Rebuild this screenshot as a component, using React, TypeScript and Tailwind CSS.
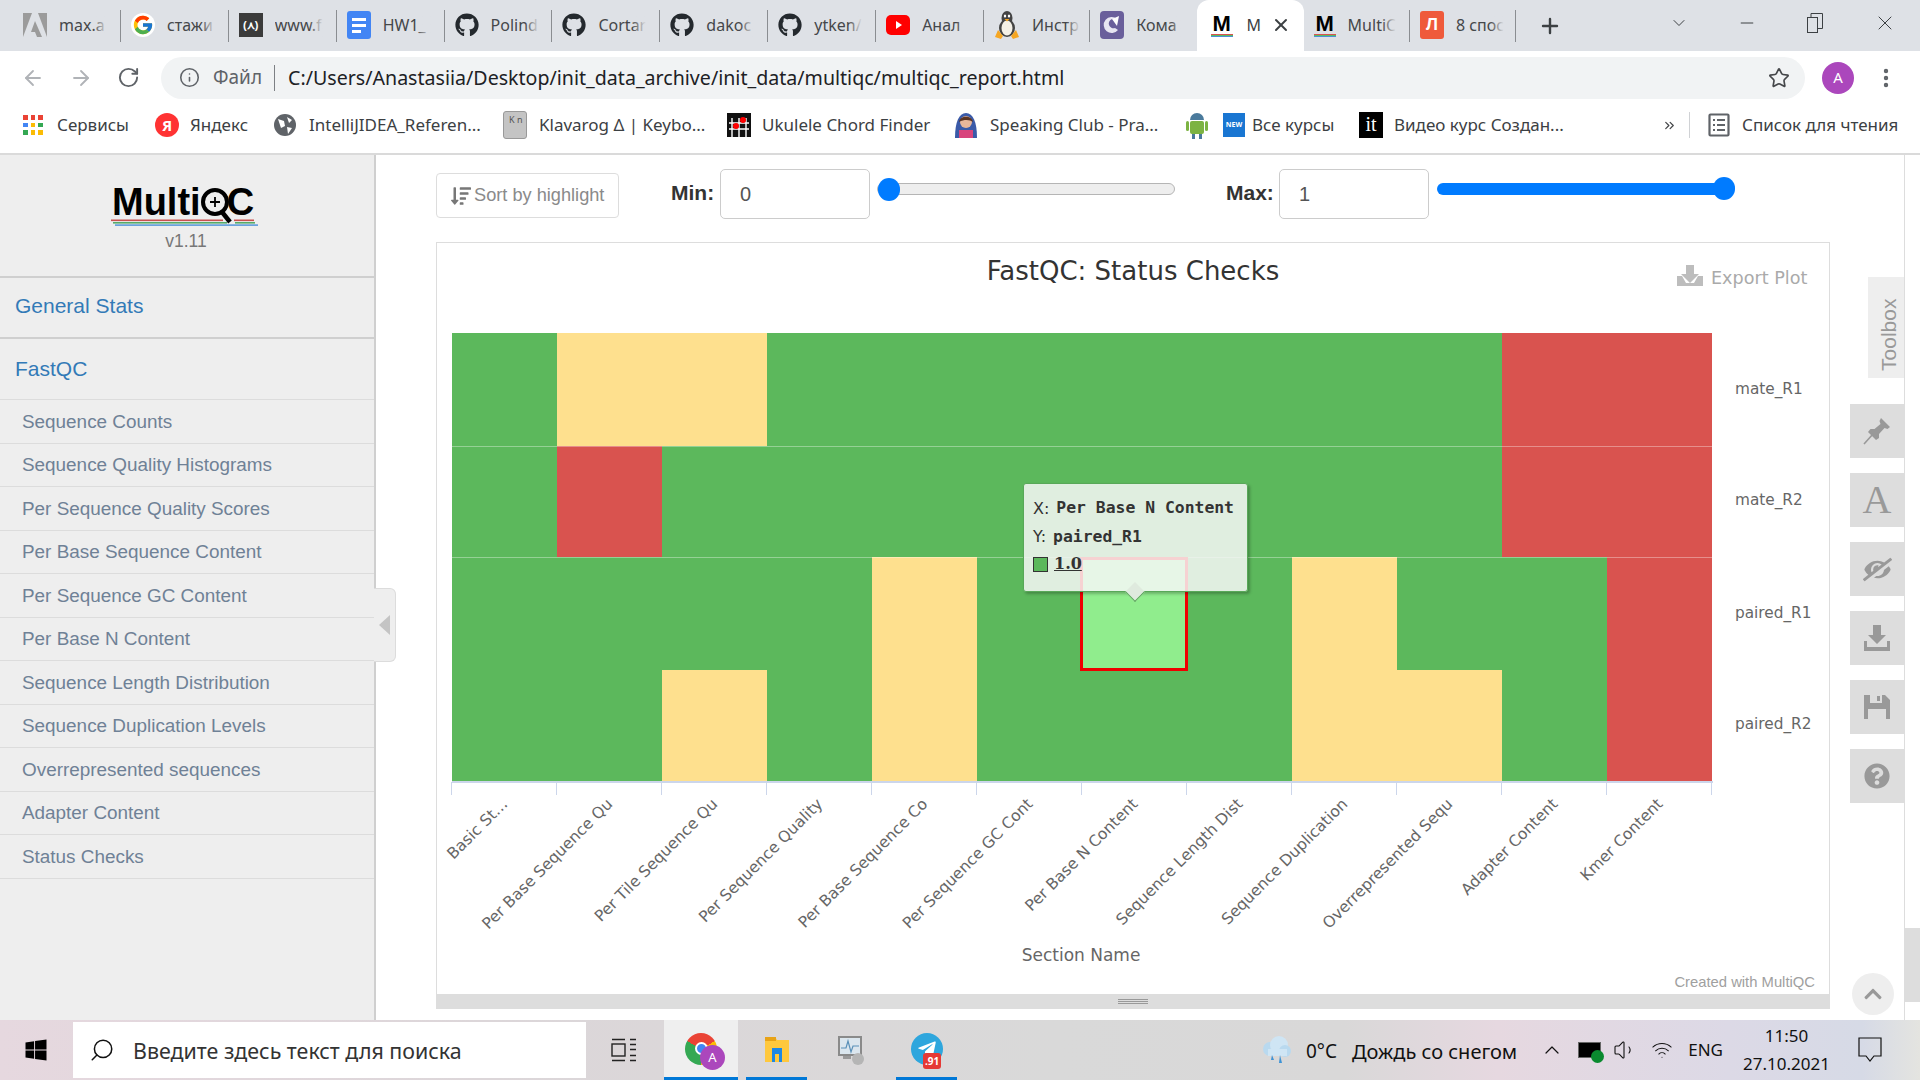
import { FcGoogle } from 'react-icons/fc';
import { FaGithub, FaWindows, FaEyeSlash, FaQuestionCircle, FaChevronUp, FaSortAmountDown, FaTelegramPlane } from 'react-icons/fa';
import { ArrowLeft, ArrowRight, RotateCw, Info, Star, EllipsisVertical, Plus, ChevronDown, Minus, X, Search, Volume1, Wifi, ChevronUp, ChevronsRight } from 'lucide-react';

const sections = [
  'Sequence Counts',
  'Sequence Quality Histograms',
  'Per Sequence Quality Scores',
  'Per Base Sequence Content',
  'Per Sequence GC Content',
  'Per Base N Content',
  'Sequence Length Distribution',
  'Sequence Duplication Levels',
  'Overrepresented sequences',
  'Adapter Content',
  'Status Checks',
];

const xLabels = [
  'Basic St…',
  'Per Base Sequence Qu',
  'Per Tile Sequence Qu',
  'Per Sequence Quality',
  'Per Base Sequence Co',
  'Per Sequence GC Cont',
  'Per Base N Content',
  'Sequence Length Dist',
  'Sequence Duplication',
  'Overrepresented Sequ',
  'Adapter Content',
  'Kmer Content',
];

// g = pass, y = warn, r = fail
const rows = [
  { name: 'mate_R1', y: 333, h: 113, labelY: 393.5, cells: 'gyygggggggrr' },
  { name: 'mate_R2', y: 446, h: 111, labelY: 505, cells: 'grggggggggrr' },
  { name: 'paired_R1', y: 557, h: 113, labelY: 617.5, cells: 'ggggygggyggr' },
  { name: 'paired_R2', y: 670, h: 111, labelY: 729, cells: 'ggygygggyygr' },
];

const cellColors: Record<string, string> = { g: '#5cb85c', y: '#fee08e', r: '#d9534f' };

function MultiqcFavicon() {
  return (
    <span className="flex flex-col items-center w-[22px] shrink-0">
      <span className="font-['Liberation_Sans',sans-serif] font-bold text-[22px] leading-[20px] text-black">M</span>
      <span className="w-[22px] h-[1px] bg-[#d9534f]" />
      <span className="w-[22px] h-[1px] bg-[#5cb85c]" />
      <span className="w-[22px] h-[1px] bg-[#4a90d9]" />
    </span>
  );
}

function TabIcon({ kind }: { kind: string }) {
  if (kind === 'adobe')
    return (
      <svg width="24" height="26" viewBox="0 0 24 26" className="shrink-0">
        <path d="M0 1h9L0 25zM15 1h9v24zM12 9l7 16h-5l-2-5H8z" fill="#9b9b9b" />
      </svg>
    );
  if (kind === 'google')
    return (
      <span className="w-[24px] h-[24px] rounded-full bg-white flex items-center justify-center shrink-0">
        <FcGoogle size={22} />
      </span>
    );
  if (kind === 'aws')
    return (
      <span className="w-[24px] h-[24px] bg-[#3b3b3b] text-white text-[11px] font-bold flex items-center justify-center shrink-0 font-['Liberation_Sans',sans-serif]">
        (⋏)
      </span>
    );
  if (kind === 'docs')
    return (
      <svg width="24" height="28" viewBox="0 0 24 28" className="shrink-0">
        <rect width="24" height="28" rx="3" fill="#4285f4" />
        <rect x="5" y="7" width="14" height="3" fill="#fff" />
        <rect x="5" y="13" width="14" height="3" fill="#fff" />
        <rect x="5" y="19" width="9" height="3" fill="#fff" />
      </svg>
    );
  if (kind === 'github') return <FaGithub size={24} className="text-[#24292e] shrink-0" />;
  if (kind === 'youtube')
    return (
      <svg width="24" height="24" viewBox="0 0 24 24" className="shrink-0">
        <rect y="2" width="24" height="20" rx="5" fill="#f00" />
        <path d="M10 8l6 4-6 4z" fill="#fff" />
      </svg>
    );
  if (kind === 'linux')
    return (
      <svg width="26" height="30" viewBox="0 0 26 30" className="shrink-0">
        <ellipse cx="13" cy="8" rx="5.5" ry="7" fill="#444" />
        <ellipse cx="13" cy="18" rx="8" ry="9" fill="#444" />
        <ellipse cx="13" cy="18" rx="5.5" ry="7.5" fill="#f4f0e6" />
        <ellipse cx="11" cy="6" rx="1.2" ry="1.6" fill="#fff" />
        <ellipse cx="15" cy="6" rx="1.2" ry="1.6" fill="#fff" />
        <path d="M10.5 9h5L13 11.5z" fill="#f5a623" />
        <path d="M1 27l3-7 5 6-2 3zM25 27l-3-7-5 6 2 3z" fill="#f5a623" />
      </svg>
    );
  if (kind === 'purple')
    return (
      <svg width="24" height="28" viewBox="0 0 24 28" className="shrink-0">
        <rect width="24" height="28" rx="4" fill="#6a5f9b" />
        <path d="M17 8a8 8 0 1 0 1 11l-3-2a4 4 0 0 1-3-9z" fill="#e8e6f2" />
        <path d="M19 5l-2 10-5-7z" fill="#fff" />
      </svg>
    );
  if (kind === 'multiqc') return <MultiqcFavicon />;
  return (
    <span className="w-[24px] h-[28px] rounded-[3px] bg-[#ef5a3b] text-white text-[17px] font-bold flex items-center justify-center shrink-0 font-['Liberation_Sans',sans-serif]">
      Л
    </span>
  );
}

const tabs = [
  { icon: 'adobe', title: 'max.a', wide: true },
  { icon: 'google', title: 'стажи', wide: true },
  { icon: 'aws', title: 'www.f', wide: true },
  { icon: 'docs', title: 'HW1_', wide: true },
  { icon: 'github', title: 'Polind', wide: true },
  { icon: 'github', title: 'Cortar', wide: true },
  { icon: 'github', title: 'dakoc', wide: true },
  { icon: 'github', title: 'ytken/', wide: true },
  { icon: 'youtube', title: 'Анал', wide: true },
  { icon: 'linux', title: 'Инстр', wide: false },
  { icon: 'purple', title: 'Кома', wide: false },
  { icon: 'multiqc', title: 'M', wide: false, active: true },
  { icon: 'multiqc', title: 'MultiC', wide: false },
  { icon: 'lj', title: '8 спос', wide: false },
];

function TabStrip() {
  return (
    <div className="h-[51px] bg-[#dee1e6] flex items-end pl-[13px] relative">
      {tabs.map((t, i) =>
        t.active ? (
          <div key={i} className="w-[107px] h-[51px] bg-white rounded-t-[12px] flex items-center pl-[14px] pb-[1px] shrink-0">
            <TabIcon kind={t.icon} />
            <span className="ml-[14px] w-[16px] overflow-hidden text-[16px] text-[#3c4043]">{t.title}</span>
            <X size={20} strokeWidth={2.4} className="ml-[8px] text-[#3c4043]" />
          </div>
        ) : (
          <div
            key={i}
            className={`${t.wide ? 'w-[107.9px]' : 'w-[106.3px]'} h-[51px] flex items-center pl-[10px] pb-[1px] shrink-0 ${i === 10 || i === 11 ? '' : 'border-r border-[#8a8d91] [border-image:linear-gradient(to_bottom,transparent_11px,#8a8d91_11px,#8a8d91_41px,transparent_41px)_1]'}`}
          >
            <TabIcon kind={t.icon} />
            <span className="relative ml-[12px] w-[48px] overflow-hidden whitespace-nowrap text-[16px] text-[#45474a]">
              {t.title}
              <span className="absolute top-0 right-0 bottom-0 w-[14px] bg-gradient-to-r from-transparent to-[#dee1e6]" />
            </span>
          </div>
        ),
      )}
      <Plus size={24} strokeWidth={2.4} className="ml-[22px] mb-[13px] text-[#3c4043]" />
      <div className="ml-auto flex items-center h-[51px] text-[#3c4043] pb-[6px]">
        <ChevronDown size={20} strokeWidth={1.2} className="mr-[48px]" />
        <Minus size={20} strokeWidth={1.2} className="mr-[50px]" />
        <svg width="16" height="20" viewBox="0 0 16 20" fill="none" stroke="#3c4043" strokeWidth="1" className="mr-[50px]">
          <rect x="0.5" y="4.5" width="10" height="15" fill="#dee1e6" />
          <path d="M4 4V0.5h11.5v15H11" />
        </svg>
        <X size={24} strokeWidth={1} className="mr-[23px]" />
      </div>
    </div>
  );
}

function AddressBar() {
  return (
    <div className="h-[50px] bg-white flex items-center pt-[3px] text-[#5f6368]">
      <ArrowLeft size={24} strokeWidth={1.8} className="ml-[21px] text-[#b0b3b7]" />
      <ArrowRight size={24} strokeWidth={1.8} className="ml-[24px] text-[#b0b3b7]" />
      <RotateCw size={23} strokeWidth={2} className="ml-[24px] text-[#5f6368]" />
      <div className="ml-[21px] w-[1644px] h-[42px] rounded-full bg-[#f1f3f4] flex items-center">
        <Info size={21} strokeWidth={1.8} className="ml-[18px]" />
        <span className="ml-[13px] text-[19px] text-[#5f6368]">Файл</span>
        <span className="ml-[12px] w-[1px] h-[26px] bg-[#7d8084]" />
        <span className="ml-[13px] pt-[1px] text-[19.6px] text-[#202124] whitespace-nowrap">
          C:/Users/Anastasiia/Desktop/init_data_archive/init_data/multiqc/multiqc_report.html
        </span>
        <Star size={22} strokeWidth={1.8} className="ml-auto mr-[15px] text-[#45474a]" />
      </div>
      <span className="ml-[17px] w-[32px] h-[32px] rounded-full bg-[#ab47bc] text-white text-[15px] flex items-center justify-center">A</span>
      <EllipsisVertical size={24} strokeWidth={2.4} className="ml-[20px] text-[#5f6368]" />
    </div>
  );
}

function AppsIcon() {
  const colors = ['#ea4335', '#ea4335', '#ea4335', '#4285f4', '#fbbc05', '#34a853', '#34a853', '#fbbc05', '#fbbc05'];
  return (
    <span className="grid grid-cols-3 gap-[3px] w-[20px] shrink-0">
      {colors.map((c, i) => (
        <span key={i} className="w-[4.6px] h-[4.6px]" style={{ backgroundColor: c }} />
      ))}
    </span>
  );
}

function BookmarksBar() {
  return (
    <div className="h-[52px] bg-white border-b-[2px] border-[#dadada] box-content flex items-center text-[17px] text-[#3c4043] whitespace-nowrap pl-[23px] pb-0">
      <div className="flex items-center w-full -mt-[4px]">
        <AppsIcon />
        <span className="ml-[14px] w-[98px]">Сервисы</span>
        <span className="w-[24px] h-[24px] rounded-full bg-[#f33] text-white text-[15px] font-bold flex items-center justify-center shrink-0">Я</span>
        <span className="ml-[11px] w-[84px]">Яндекс</span>
        <svg width="22" height="22" viewBox="0 0 22 22" className="shrink-0">
          <circle cx="11" cy="11" r="11" fill="#5f6368" />
          <path d="M4 5l6 2 1 5-4 2zM13 3l5 3-3 3zM13 13l5 1-4 6z" fill="#fff" />
        </svg>
        <span className="ml-[13px] w-[194px]">IntelliJIDEA_Referen...</span>
        <span className="w-[24px] h-[28px] rounded-[3px] bg-[#c4c4c4] border border-[#999] text-[9px] text-[#555] leading-[10px] pl-[5px] pt-[3px] shrink-0">K n</span>
        <span className="ml-[12px] w-[188px]">Klavarog Δ | Keybo...</span>
        <svg width="24" height="24" viewBox="0 0 24 24" className="shrink-0">
          <rect width="24" height="24" fill="#111" />
          <path d="M5 5v19M12 5v19M19 5v19M2 10h20M2 16h20" stroke="#fff" strokeWidth="1.4" />
          <circle cx="16" cy="7" r="3" fill="#f00" />
          <circle cx="9" cy="13" r="3" fill="#f00" />
        </svg>
        <span className="ml-[11px] w-[192px]">Ukulele Chord Finder</span>
        <svg width="24" height="26" viewBox="0 0 24 26" className="shrink-0">
          <path d="M1 26C1 10 5 1 12 1s11 9 11 25z" fill="#3a5aa8" />
          <circle cx="12" cy="10" r="6" fill="#e8b79a" />
          <path d="M5 10c1-7 13-7 14 0-3-2-8-3-14 0z" fill="#5b3423" />
          <rect x="5" y="18" width="14" height="8" fill="#d8447c" />
        </svg>
        <span className="ml-[12px] w-[196px]">Speaking Club - Pra...</span>
        <svg width="22" height="28" viewBox="0 0 22 28" className="shrink-0">
          <rect x="4" y="10" width="14" height="13" rx="2" fill="#7cb342" />
          <path d="M4 9a7 7 0 0 1 14 0z" fill="#4a7a9c" />
          <rect x="0" y="10" width="3" height="10" rx="1.5" fill="#7cb342" />
          <rect x="19" y="10" width="3" height="10" rx="1.5" fill="#7cb342" />
          <rect x="6" y="23" width="3" height="5" fill="#4a7a9c" />
          <rect x="13" y="23" width="3" height="5" fill="#4a7a9c" />
        </svg>
        <span className="ml-[15px] w-[22px] h-[24px] bg-[#1976d2] text-white text-[7px] font-bold flex items-center justify-center shrink-0">NEW</span>
        <span className="ml-[7px] w-[107px]">Все курсы</span>
        <span className="w-[24px] h-[26px] bg-black text-white text-[20px] leading-[24px] text-center shrink-0 font-['Liberation_Serif',serif]">it</span>
        <span className="ml-[11px] w-[268px]">Видео курс Создан...</span>
        <ChevronsRight size={15} strokeWidth={2} className="text-[#45474a]" />
        <span className="ml-[12px] w-[1px] h-[26px] bg-[#d0d2d5]" />
        <svg width="22" height="24" viewBox="0 0 22 24" fill="none" stroke="#5f6368" strokeWidth="2.2" className="ml-[18px] shrink-0">
          <rect x="1.5" y="1.5" width="19" height="21" rx="1" />
          <path d="M5 7h2M9 7h8M5 12h2M9 12h8M5 17h2M9 17h8" />
        </svg>
        <span className="ml-[12px]">Список для чтения</span>
      </div>
    </div>
  );
}

function Logo() {
  return (
    <div className="relative w-[150px] h-[41px] font-['Liberation_Sans',sans-serif] font-bold text-black text-[38px] leading-[36px] flex">
      <span className="ml-[1px] -mt-[1px]">Multi</span>
      <span className="-mt-[1px]">
        <svg width="33" height="41" viewBox="0 0 33 41" fill="none" stroke="#000">
          <circle cx="14" cy="18" r="12" strokeWidth="4" />
          <path d="M14 13v10M9 18h10" strokeWidth="1.8" />
          <path d="M21 28l8 10" strokeWidth="4.5" />
        </svg>
      </span>
      <span className="-ml-[7px] -mt-[1px]">C</span>
      <svg width="150" height="8" viewBox="0 0 150 8" className="absolute left-0 bottom-[-1px]">
        <rect x="0" y="0.5" width="112" height="1.6" fill="#c9504e" />
        <rect x="123" y="0.5" width="20" height="1.6" fill="#c9504e" />
        <rect x="2" y="3" width="114" height="1.6" fill="#56ab6a" />
        <rect x="124" y="3" width="20" height="1.6" fill="#56ab6a" />
        <rect x="4" y="5.4" width="143" height="1.4" fill="#4a90d9" />
      </svg>
    </div>
  );
}

function Sidebar() {
  return (
    <aside className="relative z-10 w-[376px] shrink-0 bg-[#eeeeee] border-r-2 border-[#cfcfcf] font-['Liberation_Sans',sans-serif]">
      <div className="h-[123px] border-b-2 border-[#cfcfcf] flex flex-col items-center pt-[30px] pr-[2px]">
        <Logo />
        <span className="mt-[5px] text-[17.5px] leading-[20px] text-[#777]">v1.11</span>
      </div>
      <div className="h-[61px] border-b-2 border-[#cfcfcf] flex items-center pl-[15px] pb-[3px] text-[21px] text-[#337ab7]">General Stats</div>
      <div className="h-[61px] border-b border-[#dcdcdc] flex items-center pl-[15px] text-[21px] text-[#337ab7]">FastQC</div>
      {sections.map((s) => (
        <div key={s} className="h-[43.5px] border-b border-[#dcdcdc] flex items-center pl-[22px] pt-[1px] text-[18.9px] text-[#6f8196] whitespace-nowrap">
          {s}
        </div>
      ))}
      <div className="absolute left-[374px] top-[433px] w-[22px] h-[74px] bg-[#eeeeee] border border-l-0 border-[#dcdcdc] rounded-r-[6px] flex items-center justify-center">
        <span className="w-0 h-0 border-y-[10px] border-y-transparent border-r-[11px] border-r-[#c4c4c4]" />
      </div>
    </aside>
  );
}

function Slider({ value }: { value: number }) {
  const filled = value === 1;
  return (
    <div className={`relative h-[12px] rounded-full mt-[28px] ${filled ? 'w-[296px] bg-[#007bff]' : 'w-[298px] bg-[#eeeeee] border border-[#b5b5b5]'}`}>
      <span className={`absolute top-[-6px] w-[22px] h-[23px] rounded-full bg-[#007bff] ${filled ? 'left-[276px]' : 'left-0'}`} />
    </div>
  );
}

function Controls() {
  return (
    <div className="h-[87px] flex items-start font-['Liberation_Sans',sans-serif] text-[#333]">
      <div className="mt-[18px] w-[183px] h-[45px] border border-[#dddddd] rounded-[4px] flex items-center pl-[14px] text-[#8a8a8a] text-[18.2px] whitespace-nowrap">
        <FaSortAmountDown size={20} className="mr-[3px] text-[#777]" />
        Sort by highlight
      </div>
      <span className="ml-[52px] mt-[24px] w-[42px] text-[21px] leading-[28px] font-bold">Min:</span>
      <input readOnly value="0" className="ml-[7px] mt-[14px] w-[150px] h-[50px] border border-[#cccccc] rounded-[5px] pl-[19px] pt-[1px] text-[20px] text-[#555]" />
      <div className="ml-[7px]"><Slider value={0} /></div>
      <span className="ml-[51px] mt-[24px] w-[47px] text-[21px] leading-[28px] font-bold whitespace-nowrap">Max:</span>
      <input readOnly value="1" className="ml-[6px] mt-[14px] w-[150px] h-[50px] border border-[#cccccc] rounded-[5px] pl-[19px] pt-[1px] text-[20px] text-[#555]" />
      <div className="ml-[8px]"><Slider value={1} /></div>
    </div>
  );
}

function Heatmap() {
  const x0 = 452;
  const col = 105;
  return (
    <svg width="1392" height="751" viewBox="437 243 1392 751" className="block" fontFamily="'DejaVu Sans', sans-serif">
      <text x="1133" y="280" textAnchor="middle" fontSize="26" fill="#333">FastQC: Status Checks</text>
      <g fill="#bdbdbd">
        <path d="M1686 265h8v9h5l-9 9-9-9h5z" />
        <path d="M1677 276h5l4 7h8l4-7h5v10h-26z" />
      </g>
      <text x="1711" y="284" fontSize="17.6" fill="#aaaaaa">Export Plot</text>
      {rows.map((r) =>
        r.cells.split('').map((c, i) => (
          <rect key={r.name + i} x={x0 + i * col} y={r.y} width={col} height={r.h} fill={cellColors[c]} />
        )),
      )}
      <path d="M452 446.5h1260M452 557.5h1260" stroke="#ffffff" strokeOpacity="0.35" strokeWidth="1" />
      <rect x="1081.5" y="558.5" width="105" height="111" fill="#90ed8d" stroke="#f00000" strokeWidth="3" />
      <path d="M452 782h1261" stroke="#ccd6eb" strokeWidth="2" />
      {Array.from({ length: 13 }, (_, i) => (
        <path key={i} d={`M${x0 + i * col - 0.5} 782v13`} stroke="#ccd6eb" strokeWidth="1" />
      ))}
      {xLabels.map((l, i) => {
        const cx = x0 + i * col + 52 + 4.5;
        return (
          <text key={l} x={cx} y={805} textAnchor="end" fontSize="15.6" fill="#666666" transform={`rotate(-45 ${cx} 805)`}>
            {l}
          </text>
        );
      })}
      {rows.map((r) => (
        <text key={r.name} x="1735" y={r.labelY} fontSize="15.3" fill="#666666">{r.name}</text>
      ))}
      <text x="1081" y="961" textAnchor="middle" fontSize="17" fill="#666666">Section Name</text>
      <text x="1815" y="987" textAnchor="end" fontSize="14.8" fill="#a0a0a0" fontFamily="'Liberation Sans', sans-serif">Created with MultiQC</text>
    </svg>
  );
}

function Tooltip() {
  return (
    <div className="absolute left-[586px] top-[240px] w-[225px] h-[109px] bg-[#f7f7f7]/85 border border-[#58a858] rounded-[3px] shadow-[2px_2px_3px_rgba(0,0,0,0.25)] text-[#333] pl-[9px]">
      <div className="flex items-center h-[29px] mt-[10px] font-['DejaVu_Sans',sans-serif] text-[16px]">
        X:<span className="ml-[7px] font-['DejaVu_Sans_Mono',monospace] font-bold text-[16.4px]">Per Base N Content</span>
      </div>
      <div className="flex items-center h-[28px] font-['DejaVu_Sans',sans-serif] text-[16px]">
        Y:<span className="ml-[7px] font-['DejaVu_Sans_Mono',monospace] font-bold text-[16.4px]">paired_R1</span>
      </div>
      <div className="flex items-center h-[26px]">
        <span className="w-[15px] h-[15px] bg-[#5cb85c] border border-[#333]" />
        <span className="ml-[6px] font-['DejaVu_Serif',serif] font-bold text-[16px] underline">1.0</span>
      </div>
      <span className="absolute left-[104px] top-[101px] w-[14px] h-[14px] rotate-45 bg-[#dfeade] border-r border-b border-[#58a858]" />
    </div>
  );
}

function ToolboxRail() {
  const buttons = [
    <svg width="28" height="28" viewBox="0 0 28 28" fill="currentColor">
      <path d="M18 1l9 9-2.5 2-3-1-5.5 6 0 4-3 2-8-8 2.5-3h4l6-5-1-3z" />
      <path d="M10 17L1 27" stroke="currentColor" strokeWidth="1.6" />
    </svg>,
    <span className="font-['Liberation_Serif',serif] text-[40px] leading-none">A</span>,
    <FaEyeSlash size={29} className="-scale-x-100" />,
    <svg width="26" height="26" viewBox="0 0 26 26" fill="currentColor">
      <path d="M9 0h8v10h5l-9 9-9-9h5z" />
      <path d="M0 16h3v6h20v-6h3v10H0z" />
    </svg>,
    <svg width="26" height="26" viewBox="0 0 26 26" fill="currentColor">
      <path d="M0 1h6v8h12V1h3l5 5v19h-4V15H4v10H0z" />
      <rect x="13" y="2" width="3" height="5" />
    </svg>,
    <FaQuestionCircle size={26} />,
  ];
  return (
    <div className="w-[54px] ml-[21px] shrink-0 border-r border-[#dddddd] flex flex-col items-end">
      <div className="mt-[122px] w-[36px] h-[101px] bg-[#eeeeee] flex items-center justify-center">
        <span className="-rotate-90 font-['Liberation_Sans',sans-serif] text-[21px] text-[#999] translate-x-[3px] translate-y-[7px]">Toolbox</span>
      </div>
      <div className="mt-[26px] flex flex-col gap-[15px]">
        {buttons.map((b, i) => (
          <div key={i} className="w-[54px] h-[54px] bg-[#dddddd] text-[#999] flex items-center justify-center">{b}</div>
        ))}
      </div>
    </div>
  );
}

function Content() {
  return (
    <main className="relative flex flex-1 pl-[60px] bg-white min-w-0">
      <div className="w-[1394px] shrink-0 flex flex-col">
        <Controls />
        <div className="relative w-[1394px] h-[767px] border-x border-t border-[#dddddd] flex flex-col">
          <Heatmap />
          <div className="h-[15px] bg-[#dddddd] flex flex-col items-center justify-center gap-[1px]">
            <span className="w-[30px] h-[1px] bg-[#999]" />
            <span className="w-[30px] h-[1px] bg-[#999]" />
            <span className="w-[30px] h-[1px] bg-[#999]" />
          </div>
          <Tooltip />
        </div>
      </div>
      <ToolboxRail />
      <div className="w-[15px] shrink-0 flex flex-col">
        <div className="mt-[773px] h-[74px] bg-[#dddddd]" />
      </div>
      <span className="absolute left-[1476px] top-[818px] w-[42px] h-[42px] rounded-full bg-[#eeeeee] flex items-center justify-center text-[#999]">
        <FaChevronUp size={20} />
      </span>
    </main>
  );
}

function Taskbar() {
  return (
    <footer className="h-[60px] flex items-center relative font-['Noto_Sans',sans-serif] text-[#111] bg-[linear-gradient(to_right,#e6d8df_0%,#dcd6d9_25%,#d9d9d9_55%,#d9d8d8_70%,#e6d8e0_78%,#dcd9e6_90%,#d6dae6_97%,#e4e4e0_100%)]">
      <FaWindows size={24} className="ml-[24px] text-black" />
      <div className="ml-[25px] w-[513px] h-[56px] bg-white flex items-center">
        <Search size={26} strokeWidth={1.4} className="ml-[16px] -scale-x-100 text-[#111]" />
        <span className="ml-[18px] pt-[3px] text-[21.4px] text-[#333]">Введите здесь текст для поиска</span>
      </div>
      <svg width="26" height="24" viewBox="0 0 26 24" fill="none" stroke="#222" strokeWidth="1.4" className="ml-[25px]">
        <rect x="1" y="6" width="13" height="12" />
        <path d="M1 1.5h13M1 22.5h13M19 1.5h6M19 6.5h6M19 11.5h6M19 17.5h6M19 22.5h6" />
      </svg>
      <div className="ml-[27px] w-[74px] h-[60px] bg-[#efefef] border-b-[3px] border-[#0078d7] flex items-center justify-center relative">
        <span className="w-[32px] h-[32px] rounded-full bg-[conic-gradient(from_60deg,#fbbc05_0deg_120deg,#34a853_120deg_240deg,#ea4335_240deg_360deg)] flex items-center justify-center">
          <span className="w-[13px] h-[13px] rounded-full bg-[#4285f4] border-2 border-white" />
        </span>
        <span className="absolute left-[36px] top-[25px] w-[25px] h-[25px] rounded-full bg-[#ab47bc] text-white text-[13px] flex items-center justify-center">A</span>
      </div>
      <div className="ml-[8px] w-[61px] h-[60px] border-b-[3px] border-[#0078d7] flex items-center justify-center">
        <svg width="30" height="30" viewBox="0 0 30 30">
          <path d="M3 3h10l2 3h12v22H3z" fill="#ffc83d" />
          <rect x="3" y="3" width="11" height="4" fill="#e8a317" />
          <path d="M10 28V16h10v12h-3v-8h-4v8z" fill="#1e88e5" />
          <rect x="10" y="14" width="10" height="3" fill="#1e88e5" />
        </svg>
      </div>
      <div className="w-[89px] h-[60px] flex items-center justify-center">
        <svg width="30" height="32" viewBox="0 0 30 32">
          <rect x="2" y="3" width="22" height="18" fill="#dbe6ee" stroke="#8a8a8a" strokeWidth="2" />
          <path d="M4 14h5l2-7 3 11 2-6h6" fill="none" stroke="#5a90b8" strokeWidth="1.2" />
          <circle cx="21" cy="25" r="6" fill="#b5b5b5" />
          <rect x="6" y="22" width="8" height="3" fill="#9a9a9a" />
        </svg>
      </div>
      <div className="w-[61px] h-[60px] border-b-[3px] border-[#0078d7] flex items-center justify-center relative">
        <span className="w-[32px] h-[32px] rounded-full bg-[#2ea6dd] flex items-center justify-center text-white">
          <FaTelegramPlane size={20} />
        </span>
        <span className="absolute left-[27px] top-[33px] px-[2px] h-[16px] rounded-[3px] bg-[#e53935] text-white text-[10px] font-bold leading-[16px] whitespace-nowrap">.91</span>
      </div>
      <svg width="32" height="30" viewBox="0 0 32 30" className="ml-[303px]">
        <circle cx="10" cy="14" r="7" fill="#b9d9ef" />
        <circle cx="19" cy="10" r="9" fill="#cfe5f4" />
        <circle cx="25" cy="16" r="6" fill="#b9d9ef" />
        <rect x="8" y="14" width="19" height="7" fill="#cfe5f4" />
        <path d="M12 20l-1 5h3zM20 20l-1 8h3z" fill="#3d93d6" />
      </svg>
      <span className="ml-[14px] pt-[3px] text-[19px]">0°C</span>
      <span className="ml-[15px] pt-[3px] text-[20px] whitespace-nowrap">Дождь со снегом</span>
      <ChevronUp size={24} strokeWidth={1.2} className="ml-[23px]" />
      <span className="relative ml-[14px] w-[23px] h-[16px] bg-black border border-[#666]">
        <span className="absolute left-[12px] top-[7px] w-[13px] h-[13px] rounded-full bg-[#0a8a2f]" />
      </span>
      <Volume1 size={24} strokeWidth={1.1} className="ml-[12px]" />
      <Wifi size={22} strokeWidth={1.1} className="ml-[14px]" />
      <span className="ml-[15px] text-[17px]">ENG</span>
      <div className="ml-[20px] w-[87px] flex flex-col items-center text-[17px] leading-[28px] whitespace-nowrap">
        <span>11:50</span>
        <span>27.10.2021</span>
      </div>
      <svg width="24" height="26" viewBox="0 0 24 26" fill="none" stroke="#111" strokeWidth="1.2" className="ml-[28px]">
        <path d="M1 1h22v18h-7l-4 5-4-5H1z" />
      </svg>
    </footer>
  );
}

export default function App() {
  return (
    <div className="w-[1920px] h-[1080px] overflow-hidden flex flex-col bg-white font-['Noto_Sans',sans-serif]">
      <TabStrip />
      <AddressBar />
      <BookmarksBar />
      <div className="flex flex-1 min-h-0">
        <Sidebar />
        <Content />
      </div>
      <Taskbar />
    </div>
  );
}
